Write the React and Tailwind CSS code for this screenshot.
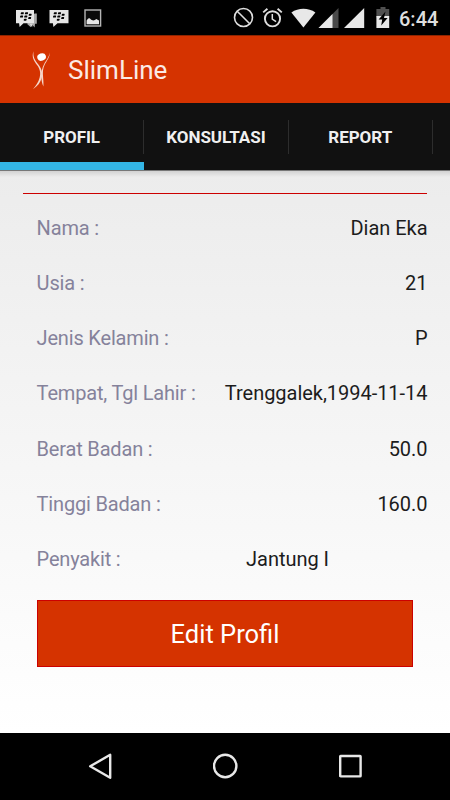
import React, { useState } from 'react'

const tabs = ['PROFIL', 'KONSULTASI', 'REPORT']

const profile = [
  { label: 'Nama :', value: 'Dian Eka' },
  { label: 'Usia :', value: '21' },
  { label: 'Jenis Kelamin :', value: 'P' },
  { label: 'Tempat, Tgl Lahir :', value: 'Trenggalek,1994-11-14' },
  { label: 'Berat Badan :', value: '50.0' },
  { label: 'Tinggi Badan :', value: '160.0' },
  { label: 'Penyakit :', value: 'Jantung I', inset: true },
]

const BbmDots = () => (
  <g fill="#000" transform="translate(.4 .4) skewX(-12)">
    <rect x="5.2" y="2.8" width="3" height="2.1" rx=".6" />
    <rect x="9.4" y="2.8" width="3" height="2.1" rx=".6" />
    <rect x="5.2" y="6" width="3" height="2.1" rx=".6" />
    <rect x="9.4" y="6" width="3" height="2.1" rx=".6" />
    <rect x="13.5" y="4.3" width="2.8" height="2.1" rx=".6" />
    <rect x="13.7" y="7.5" width="2.8" height="2.1" rx=".6" />
    <rect x="9.6" y="9.3" width="2.8" height="2" rx=".6" />
  </g>
)

const BbmStackIcon = () => (
  <svg width="22" height="20" viewBox="0 0 22 20" className="mt-[2px] shrink-0">
    <path d="M18.5 4.5h2.3v10.3H19l-.4 3.8-3-3.6-.8 3.2-3.7-3.2" fill="#a9a9a9" />
    <path d="M10.5 14.8h3l2.6 3.4.5-3.4h1.4" fill="#d9d9d9" />
    <path d="M0 1h18v13.3H7.5L3.6 18l-.5-3.7H0z" fill="#e6e6e6" />
    <BbmDots />
  </svg>
)

const BbmIcon = () => (
  <svg width="21" height="20" viewBox="0 0 21 20" className="ml-[11px] mt-[2px] shrink-0">
    <path d="M.5 1h19v13.3H8.5L4.4 18l-.5-3.7H.5z" fill="#e6e6e6" />
    <BbmDots />
  </svg>
)

const PictureIcon = () => (
  <svg width="18" height="18" viewBox="0 0 18 18" className="ml-[14px] shrink-0">
    <rect x="1" y="1" width="15.6" height="16" fill="#0a0a0a" stroke="#b5b5b5" strokeWidth="1.4" />
    <path d="M2.6 15.2v-3.7l1.5-2 1.6-.3 1.5 1.5 2 .9 1.7-.6 1.4-1 2.7 1.6v3.6z" fill="#e6e6e6" />
  </svg>
)

const StatusBar = () => (
  <div className="flex h-[35px] items-center bg-black pl-4 pr-[11px]">
    <BbmStackIcon />
    <BbmIcon />
    <PictureIcon />

    <div className="ml-auto flex items-center">
      <svg width="21" height="21" viewBox="0 0 21 21" fill="none" stroke="#dedede" strokeWidth="1.6">
        <circle cx="10.5" cy="10.5" r="9" />
        <path d="M4.2 4.2l12.6 12.6" />
      </svg>
      <svg className="ml-[8px]" width="21" height="21" viewBox="0 0 21 21" fill="none" stroke="#dedede" strokeWidth="1.9">
        <circle cx="10.5" cy="11.8" r="7.6" />
        <path d="M10.3 7v5.2l3.8 2.4" strokeWidth="1.5" />
        <path d="M1.2 5.4l4.2-3.6M15.6 1.8l4.2 3.6" />
      </svg>
      <svg className="ml-[8px]" width="25" height="20" viewBox="0 0 25 20">
        <path d="M.4 4.4C7.4-.6 17.4-.6 24.4 4.4L12.4 19.6z" fill="#e8e8e8" />
      </svg>
      <svg className="ml-[2px]" width="21" height="20" viewBox="0 0 21 20">
        <path d="M20.5 0v20H.5z" fill="#4a4a4a" />
        <path d="M14.5 6v14H.5z" fill="#e8e8e8" />
      </svg>
      <svg className="ml-[5px]" width="21" height="20" viewBox="0 0 21 20">
        <path d="M20.2 0v20H0z" fill="#e8e8e8" />
      </svg>
      <svg className="ml-[11px]" width="14" height="21" viewBox="0 0 14 21">
        <path d="M4.5 0h5v2H13.2v8.5H.4V2h4.1z" fill="#505050" />
        <path d="M.4 9h12.8v12H.4z" fill="#e8e8e8" />
        <path d="M9.5 4.5L2.6 12.6h3.6l-1 6 6.4-7.6H8z" fill="#000" />
      </svg>
      <span className="ml-[9px] mt-[2px] w-[40px] whitespace-nowrap text-[20px] font-medium leading-none text-[#dedede]">6:44</span>
    </div>
  </div>
)

// slim figure with raised arms, used as the app logo
const Logo = () => (
  <svg width="20" height="40" viewBox="0 0 20 40" className="shrink-0">
    <ellipse cx="10.6" cy="7.1" rx="4.4" ry="3.7" transform="rotate(-20 10.6 7.1)" fill="#fff" />
    <path d="M2.6 1.3C.2 7 3 11.2 6.2 15.2c2.6 3.6 3.8 7.4 2.4 12.6-1.2 4.4-3.6 8-6.6 11.4 4.4-2.6 7.6-6.8 8.8-11.6 1.2-5.2-.4-9.4-3.4-13.2C4.2 10.6 1.6 6.8 2.6 1.3z" fill="#f6d6c9" />
    <path d="M18.8 2.6c-.2 5.6-3.2 8.4-5 12-2 4-2.2 8-1.7 12.6.3 3.6.5 6 .3 9.4-1.4-3-2-6.4-2-9.6 0-5 .5-9 2.6-12.8 2-3.6 4.8-6.2 5.8-11.6z" fill="#f6d6c9" />
  </svg>
)

const Header = () => (
  <header className="flex h-[68px] items-center border-t border-[#8f2400] bg-[#d53300] pl-[31px]">
    <Logo />
    <h1 className="ml-[17px] text-[26px] leading-none text-[#fbeae5]">SlimLine</h1>
  </header>
)

const TabBar = ({ active, onChange }) => (
  <nav className="flex h-[67px] shrink-0 bg-[#111]">
    {tabs.map((tab) => (
      <button
        key={tab}
        type="button"
        onClick={() => onChange(tab)}
        className={`flex w-[144.3px] shrink-0 items-center border-b-8 pt-2 ${
          active === tab ? 'border-[#33b5e5]' : 'border-[#111]'
        }`}
      >
        <span className="flex h-[34px] flex-1 items-center justify-center border-r border-[#2d2d2d] pt-[3px] text-[17px] font-bold tracking-[-0.05px] text-[#f0f0f0]">
          {tab}
        </span>
      </button>
    ))}
  </nav>
)

const NavigationBar = () => (
  <footer className="flex h-[67px] items-center justify-between bg-black pb-[2px] pl-[88px] pr-[88px]">
    <svg width="25" height="28" viewBox="0 0 25 28" fill="none" stroke="#e8e8e8" strokeWidth="2.4" strokeLinejoin="round">
      <path d="M22.2 2.8v23L2.2 14.3z" />
    </svg>
    <svg width="26" height="26" viewBox="0 0 26 26" fill="none" stroke="#e8e8e8" strokeWidth="2.4">
      <circle cx="12.2" cy="13" r="11.2" />
    </svg>
    <svg width="24" height="24" viewBox="0 0 24 24" fill="none" stroke="#e8e8e8" strokeWidth="2.4" strokeLinejoin="round">
      <rect x="2.2" y="2" width="20.4" height="20.4" rx="0.5" />
    </svg>
  </footer>
)

const App = () => {
  const [activeTab, setActiveTab] = useState('PROFIL')

  return (
    <div className="flex h-[800px] w-[450px] flex-col overflow-hidden bg-black font-[Roboto,sans-serif]">
      <StatusBar />
      <Header />
      <TabBar active={activeTab} onChange={setActiveTab} />

      <main className="flex-1 bg-linear-to-b from-[#ececec] to-white">
        <div className="h-[7px] border-t border-[#777] bg-linear-to-b from-[#d2d2d2] to-[#ececec]" />
        <div className="ml-[23px] mr-[23px] h-[17px] border-b border-[#c00]" />

        <dl className="mt-[5.9px] pl-[36.6px] pr-[22.5px]">
          {profile.map((item) => (
            <div key={item.label} className="flex h-[55.25px] items-center justify-between text-[20px] leading-6">
              <dt className="tracking-[-0.18px] text-[#85829b]">{item.label}</dt>
              <dd className={`tracking-[-0.03px] text-[#1c1c1c] ${item.inset ? 'mr-[98.5px]' : ''}`}>{item.value}</dd>
            </div>
          ))}
        </dl>

        <button
          type="button"
          className="ml-[37px] mt-[13.3px] h-[67px] w-[376px] border border-[#cc0000] bg-[#d53300] pt-[2px] text-[25.5px] text-white"
        >
          Edit Profil
        </button>
      </main>

      <NavigationBar />
    </div>
  )
}

export default App
